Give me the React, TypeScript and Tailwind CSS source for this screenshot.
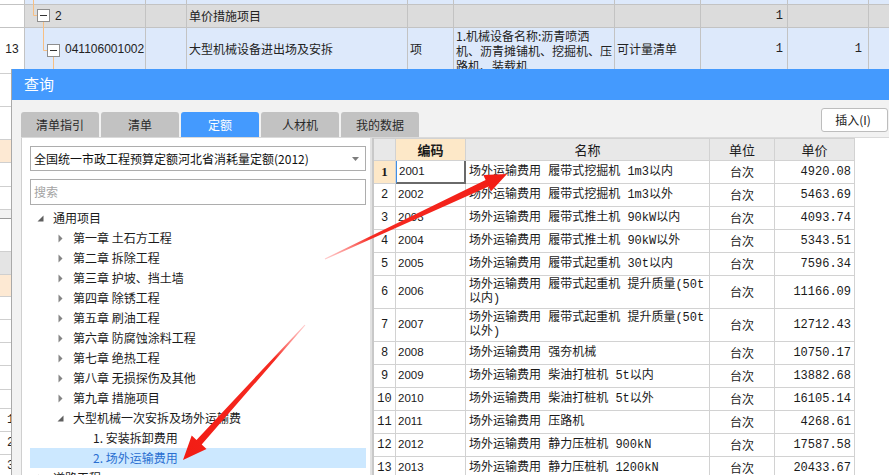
import React from 'react';

const cols = [25, 121, 41, 221, 46, 161, 86, 87, 81];

// background grid (the sheet behind the dialog)
const BgCell = ({ w, className = '', children }: { w?: number; className?: string; children?: React.ReactNode }) => (
  <div
    className={`shrink-0 border-r border-[#c3c3c3] h-full overflow-hidden ${className}`}
    style={w ? { width: w } : undefined}
  >
    {children}
  </div>
);

const lowerRows: { h: number; bg?: string; num?: string; dark?: boolean }[] = [
  { h: 5 }, { h: 33 }, { h: 33 }, { h: 23, bg: 'bg-[#fde9d3]' }, { h: 24 }, { h: 23 },
  { h: 9, dark: true }, { h: 33 }, { h: 23, bg: 'bg-[#e4e4e4]' }, { h: 22, bg: 'bg-[#fde9d3]' },
  { h: 23 }, { h: 23 }, { h: 23 }, { h: 24 }, { h: 19 },
  { h: 23, num: '1' }, { h: 23, num: '2' }, { h: 23, num: '3' },
];

function BackgroundSheet() {
  return (
    <div className="relative w-[889px] text-[12px] text-[#222] font-['Noto_Sans_CJK_SC',sans-serif]">
      {/* partial row at top */}
      <div className="flex h-[5px] bg-[#dde9fb] border-b border-[#c3c3c3]">
        <BgCell w={cols[0]} className="bg-white" />
        {cols.slice(1).map((w, i) => <BgCell key={i} w={w} />)}
        <div className="flex-1" />
      </div>
      {/* row 2 */}
      <div className="flex h-[23px] bg-[#dcdcdc] border-b border-[#c3c3c3] leading-[22px]">
        <BgCell w={cols[0]} className="bg-white" />
        <BgCell w={cols[1]} className="pl-[30px] font-['Liberation_Sans',sans-serif]">2</BgCell>
        <BgCell w={cols[2]} />
        <BgCell w={cols[3]} className="pl-[2px]">单价措施项目</BgCell>
        <BgCell w={cols[4]} />
        <BgCell w={cols[5]} />
        <BgCell w={cols[6]} />
        <BgCell w={cols[7]} className="text-right pr-[4px] font-['Liberation_Mono',monospace]">1</BgCell>
        <BgCell w={cols[8]} />
        <div className="flex-1" />
      </div>
      {/* row 13 */}
      <div className="flex h-[41px] bg-[#dde9fb] items-stretch">
        <BgCell w={cols[0]} className="bg-white flex items-center justify-center font-['Liberation_Sans',sans-serif]">13</BgCell>
        <BgCell w={cols[1]} className="flex items-center pl-[40px] font-['Liberation_Sans',sans-serif]">041106001002</BgCell>
        <BgCell w={cols[2]} />
        <BgCell w={cols[3]} className="flex items-center pl-[2px]">大型机械设备进出场及安拆</BgCell>
        <BgCell w={cols[4]} className="flex items-center pl-[2px]">项</BgCell>
        <BgCell w={cols[5]} className="pl-[2px] leading-[15px] whitespace-nowrap">
          1.机械设备名称:沥青喷洒<br />机、沥青摊铺机、挖掘机、压<br />路机、装载机
        </BgCell>
        <BgCell w={cols[6]} className="flex items-center pl-[2px]">可计量清单</BgCell>
        <BgCell w={cols[7]} className="flex items-center justify-end pr-[4px] font-['Liberation_Mono',monospace]">1</BgCell>
        <BgCell w={cols[8]} className="flex items-center justify-end pr-[6px] font-['Liberation_Mono',monospace]">1</BgCell>
        <div className="flex-1" />
      </div>
      {/* rows hidden behind the dialog, only the left edge shows */}
      {lowerRows.map((r, i) => (
        <div
          key={i}
          className={`flex border-b ${r.dark ? 'border-[#9a9a9a] bg-[#f2f2f2]' : 'border-[#cfcfcf]'}`}
          style={{ height: r.h }}
        >
          <div className={`w-[25px] pl-[7px] leading-[22px] font-['Liberation_Mono',monospace] ${r.bg ?? ''}`}>{r.num}</div>
        </div>
      ))}
      {/* tree connectors */}
      <svg className="absolute left-[25px] top-0" width="121" height="69" viewBox="0 0 121 69">
        <g stroke="#f7bf83" strokeWidth="1" fill="none">
          <path d="M8.5 0 V15.5 H12" />
          <path d="M18.5 22 V50.5 H22" />
          <path d="M28.5 57 V69" />
        </g>
        <g stroke="#8e8e8e" strokeWidth="1" fill="#fff">
          <rect x="12.5" y="9.5" width="12" height="12" />
          <rect x="22.5" y="44.5" width="12" height="12" />
        </g>
        <g stroke="#333" strokeWidth="1">
          <path d="M15 15.5 H22" />
          <path d="M25 50.5 H32" />
        </g>
      </svg>
    </div>
  );
}

const tabs = ['清单指引', '清单', '定额', '人材机', '我的数据'];

type TreeNode = { label: string; level: number; state?: 'open' | 'closed'; selected?: boolean };

const tree: TreeNode[] = [
  { label: '通用项目', level: 0, state: 'open' },
  { label: '第一章 土石方工程', level: 1, state: 'closed' },
  { label: '第二章 拆除工程', level: 1, state: 'closed' },
  { label: '第三章 护坡、挡土墙', level: 1, state: 'closed' },
  { label: '第四章 除锈工程', level: 1, state: 'closed' },
  { label: '第五章 刷油工程', level: 1, state: 'closed' },
  { label: '第六章 防腐蚀涂料工程', level: 1, state: 'closed' },
  { label: '第七章 绝热工程', level: 1, state: 'closed' },
  { label: '第八章 无损探伤及其他', level: 1, state: 'closed' },
  { label: '第九章 措施项目', level: 1, state: 'closed' },
  { label: '大型机械一次安拆及场外运输费', level: 1, state: 'open' },
  { label: '1. 安装拆卸费用', level: 2 },
  { label: '2. 场外运输费用', level: 2, selected: true },
  { label: '道路工程', level: 0, state: 'closed' },
];

const TreeRow = ({ node }: { node: TreeNode }) => (
  <div className={`flex items-center h-[20px] shrink-0 ${node.selected ? 'bg-[#cce8ff] text-[#2a6fd1]' : 'text-[#1a1a1a]'}`}>
    <div className="shrink-0" style={{ width: node.level * 20 }} />
    <div className="w-[23px] shrink-0 flex items-center">
      {node.state === 'open' && (
        <svg className="ml-[7px]" width="7" height="7" viewBox="0 0 7 7">
          <polygon points="6.5,0.5 6.5,6.5 0.5,6.5" fill="#5f5f5f" />
        </svg>
      )}
      {node.state === 'closed' && (
        <svg className="ml-[8px]" width="5" height="9" viewBox="0 0 5 9">
          <polygon points="0.5,0.5 4.5,4.5 0.5,8.5" fill="#858585" />
        </svg>
      )}
    </div>
    <span className="whitespace-nowrap leading-none">{node.label}</span>
  </div>
);

type QuotaRow = { code: string; name: React.ReactNode; price: string; tall?: boolean };

const rows: QuotaRow[] = [
  { code: '2001', name: '场外运输费用 履带式挖掘机 1m3以内', price: '4920.08' },
  { code: '2002', name: '场外运输费用 履带式挖掘机 1m3以外', price: '5463.69' },
  { code: '2003', name: '场外运输费用 履带式推土机 90kW以内', price: '4093.74' },
  { code: '2004', name: '场外运输费用 履带式推土机 90kW以外', price: '5343.51' },
  { code: '2005', name: '场外运输费用 履带式起重机 30t以内', price: '7596.34' },
  { code: '2006', name: <>场外运输费用 履带式起重机 提升质量(50t<br />以内)</>, price: '11166.09', tall: true },
  { code: '2007', name: <>场外运输费用 履带式起重机 提升质量(50t<br />以外)</>, price: '12712.43', tall: true },
  { code: '2008', name: '场外运输费用 强夯机械', price: '10750.17' },
  { code: '2009', name: '场外运输费用 柴油打桩机 5t以内', price: '13882.68' },
  { code: '2010', name: '场外运输费用 柴油打桩机 5t以外', price: '16105.14' },
  { code: '2011', name: '场外运输费用 压路机', price: '4268.61' },
  { code: '2012', name: '场外运输费用 静力压桩机 900kN', price: '17587.58' },
  { code: '2013', name: '场外运输费用 静力压桩机 1200kN', price: '20433.67' },
];

const cell = 'shrink-0 border-r border-b border-[#d2d2d2] flex items-center';

function QuotaTable() {
  return (
    <div className="w-[482px] border-l border-[#c8c8c8] text-[12px] text-[#1a1a1a] font-['Liberation_Mono','Noto_Sans_CJK_SC',monospace]">
      <div className="flex h-[23px] bg-[#e8e8e8] text-[13px] font-['Noto_Sans_CJK_SC',sans-serif] border-t border-[#d2d2d2]">
        <div className={`${cell} w-[22px]`} />
        <div className={`${cell} w-[70px] justify-center bg-[#fde8c8] font-bold`}>编码</div>
        <div className={`${cell} w-[244px] justify-center`}>名称</div>
        <div className={`${cell} w-[65px] justify-center`}>单位</div>
        <div className={`${cell} w-[80px] justify-center`}>单价</div>
      </div>
      {rows.map((r, i) => (
        <div key={r.code} className={`flex ${r.tall ? 'h-[33px]' : 'h-[23px]'}`}>
          <div className={`${cell} w-[22px] justify-center ${i === 0 ? 'bg-[#fde8c8] font-bold font-["Liberation_Serif",serif] text-[13px]' : ''}`}>{i + 1}</div>
          <div
            className={`${cell} w-[70px] pl-[2px] text-[11.5px] font-['Liberation_Sans',sans-serif] ${
              i === 0 ? 'border-l border-l-[#3f8fe6] border-r-2 border-b-2 border-r-[#6a6a6a] border-b-[#6a6a6a]' : ''
            }`}
          >
            {r.code}
          </div>
          <div className={`${cell} w-[244px] pl-[3px] whitespace-nowrap leading-[14px]`}>
            <span>{r.name}</span>
          </div>
          <div className={`${cell} w-[65px] justify-center font-['Noto_Sans_CJK_SC',sans-serif]`}>台次</div>
          <div className={`${cell} w-[80px] justify-end pr-[3px]`}>{r.price}</div>
        </div>
      ))}
    </div>
  );
}

function QueryDialog() {
  return (
    <div className="absolute left-[11px] top-[69px] w-[878px] h-[406px] flex flex-col bg-[#f2f2f2] border-l border-[#a9a9a9] font-['Noto_Sans_CJK_SC',sans-serif]">
      <div className="h-[31px] shrink-0 bg-[#449afe] flex items-center pl-[12px] text-[15px] text-white">查询</div>

      <div className="h-[37px] shrink-0 flex pl-[9px]">
        <div className="flex items-end gap-[2px]">
          {tabs.map((t) => (
            <div
              key={t}
              className={`w-[78px] h-[25px] rounded-t-[3px] flex items-center justify-center text-[12px] ${
                t === '定额' ? 'bg-[#449afe] text-white' : 'bg-[#c2c2c2] text-[#2a2a2a]'
              }`}
            >
              {t}
            </div>
          ))}
        </div>
        <button className="ml-auto mt-[8px] mr-[1px] w-[67px] h-[24px] bg-white border border-[#bdbdbd] rounded-[3px] text-[12px] text-[#222] pr-[3px]">
          插入(I)
        </button>
      </div>

      <div className="flex flex-1 min-h-0 ml-[9px] bg-white border-t border-[#dadada] overflow-hidden">
        {/* left: quota library + chapter tree */}
        <div className="w-[349px] shrink-0 flex flex-col border-l border-[#cfcfcf] pl-[8px] pr-[4px] pt-[8px] text-[12px]">
          <div className="h-[25px] w-[336px] shrink-0 border border-[#adadad] flex items-center pl-[3px] pr-[6px] text-[12px] text-[#111]">
            <span className="flex-1 whitespace-nowrap">全国统一市政工程预算定额河北省消耗量定额(2012)</span>
            <svg width="7" height="4" viewBox="0 0 7 4">
              <polygon points="0,0 7,0 3.5,4" fill="#7d7d7d" />
            </svg>
          </div>
          <div className="h-[26px] w-[336px] shrink-0 mt-[8px] border border-[#adadad] flex items-center pl-[3px] text-[12px] text-[#a3a3a3]">
            搜索
          </div>
          <div className="mt-[3px] flex flex-col w-[336px]">
            {tree.map((n) => <TreeRow key={n.label} node={n} />)}
          </div>
        </div>
        <div className="w-[3px] shrink-0 bg-[#e2e2e2] border-r border-[#c9c9c9]" />
        {/* right: quota list */}
        <div className="flex-1 min-w-0 bg-white">
          <QuotaTable />
        </div>
      </div>
    </div>
  );
}

// red annotation arrows drawn on the screenshot
function Arrows() {
  return (
    <svg className="absolute inset-0 pointer-events-none" width="889" height="475" viewBox="0 0 889 475">
      <defs>
        <linearGradient id="a1" x1="325" y1="259" x2="507" y2="174" gradientUnits="userSpaceOnUse">
          <stop offset="0" stopColor="#ff8080" stopOpacity="0.4" />
          <stop offset="0.25" stopColor="#f62b22" />
          <stop offset="1" stopColor="#f21c14" />
        </linearGradient>
        <linearGradient id="a2" x1="305" y1="325" x2="183" y2="460" gradientUnits="userSpaceOnUse">
          <stop offset="0" stopColor="#ff8080" stopOpacity="0.4" />
          <stop offset="0.25" stopColor="#f62b22" />
          <stop offset="1" stopColor="#f21c14" />
        </linearGradient>
      </defs>
      <polygon
        points="325.2,259.5 488.6,186.5 490.9,191.5 507,174 483.3,175.1 485.6,180.1 324.8,258.5"
        fill="url(#a1)"
      />
      <polygon
        points="305.4,325.3 201.7,444.5 206.5,448.9 183,460 191.7,435.5 196.5,439.9 304.6,324.7"
        fill="url(#a2)"
      />
    </svg>
  );
}

export default function App() {
  return (
    <div className="relative w-[889px] h-[475px] overflow-hidden bg-white">
      <BackgroundSheet />
      <QueryDialog />
      <Arrows />
    </div>
  );
}
